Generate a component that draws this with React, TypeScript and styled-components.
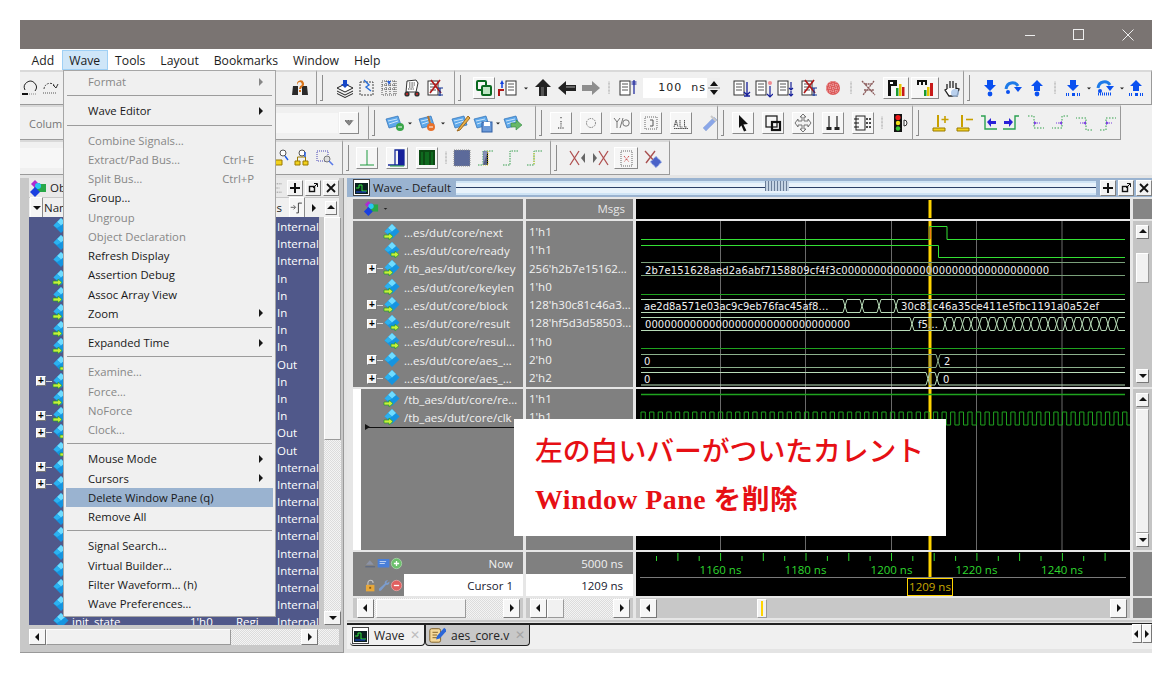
import React from 'react';
import styled, { createGlobalStyle } from 'styled-components';

const UI_FONT = '"Open Sans", "Noto Sans", sans-serif';
const PANEL_GRAY = '#c8c8c8';
const BAR_GRAY = '#f0f0f0';
const WAVE_GRAY = '#808080';
const LIST_BLUE = '#50588a';
const HILITE = '#9ab3d0';
const GREEN = '#34e034';
const DIM_GREEN = '#1fa31f';
const CURSOR = '#ffd400';

const GlobalStyle = createGlobalStyle`
  html, body { margin: 0; padding: 0; background: #fff; }
  body { font-family: ${UI_FONT}; font-size: 11.5px; overflow: hidden; }
`;

const Page = styled.div`
  width: 1172px;
  height: 673px;
  padding: 20px;
  box-sizing: border-box;
`;

const AppWindow = styled.div`
  position: relative;
  width: 1132px;
  height: 633px;
  display: flex;
  flex-direction: column;
  background: ${PANEL_GRAY};
  overflow: hidden;
`;

const TitleBar = styled.div`
  height: 29px;
  flex: none;
  background: #7a7472;
  display: flex;
  justify-content: flex-end;
  align-items: center;
`;

const WinButton = styled.div`
  width: 49px;
  height: 29px;
  display: flex;
  align-items: center;
  justify-content: center;
  svg { display: block; }
`;

const MenuBar = styled.div`
  height: 21px;
  flex: none;
  background: #fff;
  display: flex;
  align-items: center;
  padding-left: 4px;
  font-size: 12.2px;
  color: #1c1c1c;
`;

const MenuTitle = styled.div<{ $active?: boolean }>`
  height: 20px;
  line-height: 19px;
  padding: 0 6.5px;
  box-sizing: border-box;
  background: ${(p) => (p.$active ? '#cfe6f8' : 'transparent')};
  border: 1px solid ${(p) => (p.$active ? '#9fd0f5' : 'transparent')};
`;

const ToolRow = styled.div`
  height: 35px;
  flex: none;
  display: flex;
  background: ${BAR_GRAY};
`;

const ToolGroup = styled.div<{ $w: number }>`
  width: ${(p) => p.$w}px;
  flex: none;
  height: 35px;
  box-sizing: border-box;
  display: flex;
  align-items: center;
  border-top: 2px solid #d9d9d9;
  border-bottom: 1px solid #9a9a9a;
  border-right: 1px solid #9a9a9a;
  overflow: hidden;
`;

const Handle = styled.div`
  width: 12px;
  flex: none;
  height: 26px;
  &::before {
    content: '';
    display: block;
    width: 3px;
    height: 26px;
    margin-left: 3px;
    box-sizing: border-box;
    border-right: 1px solid #8c8c8c;
    border-bottom: 1px solid #8c8c8c;
  }
`;

const Slot = styled.div<{ $w: number; $raised?: boolean }>`
  width: ${(p) => p.$w}px;
  flex: none;
  height: 22px;
  box-sizing: border-box;
  display: flex;
  align-items: center;
  justify-content: center;
  ${(p) =>
    p.$raised
      ? `background:#f6f6f6;border:1px solid;border-color:#fff #8a8a8a #8a8a8a #fff;margin:0 1px;`
      : ''}
  svg { display: block; flex: none; }
`;

const TimeInput = styled.div`
  width: 64px;
  height: 20px;
  margin-left: 4px;
  flex: none;
  background: #fff;
  text-align: right;
  line-height: 20px;
  padding-right: 1px;
  box-sizing: border-box;
  font-family: "DejaVu Sans", sans-serif;
  font-size: 11px;
  letter-spacing: 1px;
  color: #222;
  white-space: pre;
`;

const FieldLabel = styled.div`
  width: 60px;
  flex: none;
  padding-left: 9px;
  box-sizing: border-box;
  color: #777;
  font-size: 11px;
`;

const FieldFill = styled.div<{ $w: number }>`
  width: ${(p) => p.$w}px;
  flex: none;
  height: 20px;
  background: #f7f7f7;
`;

const Pusher = styled.div`
  flex: 1;
`;

const Workspace = styled.div`
  flex: 1;
  display: flex;
  padding-top: 3px;
  background: #e4e4e4;
  min-height: 0;
`;

const ObjectsPanel = styled.div`
  width: 324px;
  flex: none;
  background: ${PANEL_GRAY};
  padding: 0 4px 0 9px;
  box-sizing: border-box;
  display: flex;
  flex-direction: column;
  height: 475px;
  border-bottom: 1px solid #999;
  border-right: 1px solid #999;
`;

const PanelTitle = styled.div<{ $tint?: boolean }>`
  height: 19px;
  flex: none;
  display: flex;
  align-items: center;
  background: ${(p) => (p.$tint ? HILITE : '#e9e9e9')};
  color: #222;
  font-size: 11.5px;
  gap: 3px;
  svg { flex: none; }
`;

const Grip = styled.div`
  flex: 1;
  height: 10px;
  margin: 0 2px;
  border-top: 2px solid #cfe4f5;
  border-bottom: 2px solid #cfe4f5;
  background: linear-gradient(#2a3f66, #2a3f66) center / 100% 1px no-repeat, #e8f2fa;
  position: relative;
`;

const GripDots = styled.div`
  position: absolute;
  left: 309px;
  top: -2px;
  width: 24px;
  height: 10px;
  background: repeating-linear-gradient(90deg, #6c7f99 0 1px, #c5d4e4 1px 3px);
`;

const TitleButton = styled.div`
  width: 16px;
  height: 16px;
  margin-left: -1px;
  flex: none;
  background: #f3f3f3;
  border: 1px solid;
  border-color: #fff #808080 #808080 #fff;
  box-sizing: border-box;
  display: flex;
  align-items: center;
  justify-content: center;
`;

const ListHead = styled.div`
  height: 19px;
  flex: none;
  margin-top: 1px;
  display: flex;
  align-items: center;
  background: ${BAR_GRAY};
  color: #222;
`;

const ListBody = styled.div`
  display: flex;
  height: 408px;
  flex: none;
`;

const ObjectList = styled.div`
  width: 290px;
  flex: none;
  background: ${LIST_BLUE};
  overflow: hidden;
  padding-top: 1px;
  box-sizing: border-box;
`;

const ObjectRow = styled.div`
  height: 17.2px;
  display: grid;
  grid-template-columns: 7px 16px 20px 118px 46px 41px 42px;
  align-items: center;
  color: #fff;
  white-space: nowrap;
  line-height: 17px;
`;

const PlusBox = styled.div`
  width: 10px;
  height: 10px;
  flex: none;
  box-sizing: border-box;
  background: #f2f2f2;
  border: 1px solid;
  border-color: #fff #777 #777 #fff;
  color: #000;
  font: bold 10px/8px "Liberation Sans", sans-serif;
  text-align: center;
`;

const Connector = styled.div`
  width: 6px;
  height: 1px;
  flex: none;
  background: #d8d8d8;
`;

const VScroll = styled.div`
  width: 17px;
  flex: none;
  margin-left: 5px;
  background: repeating-conic-gradient(#dcdcdc 0 25%, #f4f4f4 0 50%) 0 0 / 2px 2px;
  display: flex;
  flex-direction: column;
`;

const PaneScroll = styled.div`
  background: #c4c4c4;
  display: flex;
  flex-direction: column;
  padding: 4px 3px;
`;

const SmallArrowBtn = styled.div`
  height: 14px;
  flex: none;
  background: #f3f3f3;
  border: 1px solid;
  border-color: #fff #777 #777 #fff;
  box-sizing: border-box;
  display: flex;
  align-items: center;
  justify-content: center;
`;

const Thumb = styled.div<{ $h: number; $mt?: number }>`
  height: ${(p) => p.$h}px;
  margin-top: ${(p) => p.$mt || 0}px;
  flex: none;
  background: #f1f1f1;
  border: 1px solid;
  border-color: #fff #9a9a9a #9a9a9a #fff;
  box-sizing: border-box;
`;

const Flexer = styled.div`
  flex: 1;
`;

const HScroll = styled.div<{ $plain?: boolean }>`
  height: 20px;
  display: flex;
  align-items: center;
  background: ${(p) =>
    p.$plain ? PANEL_GRAY : 'repeating-conic-gradient(#dcdcdc 0 25%, #f4f4f4 0 50%) 0 0 / 2px 2px'};
`;

const ObjectsHScroll = styled(HScroll)`
  margin-top: 4px;
  height: 16px;
  & > div { height: 16px; }
`;

const HArrow = styled.div`
  width: 17px;
  height: 19px;
  flex: none;
  background: #f6f6f6;
  border: 1px solid;
  border-color: #fff #777 #777 #fff;
  box-sizing: border-box;
  display: flex;
  align-items: center;
  justify-content: center;
`;

const HThumb = styled.div<{ $w: number; $ml?: number }>`
  width: ${(p) => p.$w}px;
  margin-left: ${(p) => p.$ml || 0}px;
  height: 19px;
  flex: none;
  background: #f1f1f1;
  border: 1px solid;
  border-color: #fff #9a9a9a #9a9a9a #fff;
  box-sizing: border-box;
  display: flex;
  justify-content: center;
`;

const MarkLine = styled.div`
  width: 2px;
  height: 15px;
  margin-top: 1px;
  background: ${CURSOR};
`;

const WavePanel = styled.div`
  margin-left: 3px;
  width: 805px;
  flex: none;
  background: ${PANEL_GRAY};
  display: flex;
  flex-direction: column;
  height: 444px;
`;

const WaveGrid = styled.div`
  display: grid;
  grid-template-columns: 170px 107px 494px 19px;
  grid-template-rows: 20px 166px 161px 44px 20px;
  column-gap: 3px;
  row-gap: 2px;
  padding: 2px 0 0 6px;
  height: 421px;
  flex: none;
  background: #e6e6e6;
`;

const GrayCell = styled.div`
  background: ${WAVE_GRAY};
  color: #f2f2f2;
  position: relative;
  overflow: hidden;
`;

const MsgsLabel = styled.div`
  text-align: right;
  padding-right: 8px;
  line-height: 20px;
  color: #e6e6e6;
`;

const AddIconCell = styled.div`
  padding: 1px 0 0 10px;
  display: flex;
  align-items: center;
  gap: 2px;
`;

const CurrentPaneStrip = styled.div`
  display: flex;
  height: 100%;
`;

const PaneMarker = styled.div`
  width: 8px;
  flex: none;
  background: #fff;
`;

const PaneRows = styled.div<{ $pad: number }>`
  flex: 1;
  padding-top: ${(p) => p.$pad}px;
  min-width: 0;
`;

const SignalRow = styled.div`
  height: 18.3px;
  display: grid;
  grid-template-columns: 16px 16px 5px 1fr;
  align-items: center;
  white-space: nowrap;
  padding-left: 14px;
  font-size: 11.5px;
`;

const SignalRowInner = styled(SignalRow)`
  padding-left: 6px;
`;

const TreeCell = styled.div`
  display: flex;
  align-items: center;
`;

const ValueRow = styled.div`
  height: 18.3px;
  line-height: 18.3px;
  padding-left: 3px;
  white-space: nowrap;
  font-size: 11.5px;
`;

const InsertLine = styled.div`
  position: absolute;
  left: 12px;
  top: 38px;
  right: 0;
  height: 1px;
  background: #111;
  &::before {
    content: '';
    position: absolute;
    left: 0;
    top: -3px;
    border-left: 5px solid #111;
    border-top: 3px solid transparent;
    border-bottom: 3px solid transparent;
  }
`;

const CursorRows = styled.div`
  display: flex;
  flex-direction: column;
  height: 100%;
`;

const CursorLine = styled.div<{ $white?: boolean }>`
  height: 22px;
  display: flex;
  align-items: center;
  justify-content: flex-end;
  padding-right: 10px;
  background: ${(p) => (p.$white ? '#fff' : 'transparent')};
  color: ${(p) => (p.$white ? '#202030' : '#f0f0f0')};
`;

const CursorHead = styled.div`
  height: 22px;
  display: grid;
  grid-template-columns: 51px 1fr;
`;

const HeadIcons = styled.div`
  display: flex;
  align-items: center;
  justify-content: flex-end;
  gap: 0;
  padding-right: 1px;
`;

const Canvas = styled.svg`
  display: block;
  width: 100%;
  height: 100%;
  background: #000;
  font-family: "DejaVu Sans", sans-serif;
`;

const ScrollCell = styled.div`
  display: flex;
  flex-direction: column;
  background: ${PANEL_GRAY};
  height: 100%;
  padding: 0 3px 0 4px;
  box-sizing: border-box;
`;

const GrayBlock = styled.div`
  background: #858585;
`;

const TabStrip = styled.div`
  margin-top: 3px;
  height: 24px;
  flex: none;
  display: flex;
  background: ${BAR_GRAY};
  border-top: 2px solid #222;
  padding-left: 3px;
  font-size: 12px;
  position: relative;
`;

const Tab = styled.div<{ $w: number; $current?: boolean }>`
  width: ${(p) => p.$w}px;
  height: 21px;
  box-sizing: border-box;
  display: flex;
  align-items: center;
  gap: 5px;
  padding-left: 2px;
  color: #222;
  background: ${(p) => (p.$current ? PANEL_GRAY : BAR_GRAY)};
  border-bottom: 1px solid #222;
  border-right: 1px solid #222;
  border-left: ${(p) => (p.$current ? '1px solid #222' : '0')};
  border-radius: 0 0 4px 4px;
  svg { flex: none; }
`;

const TabClose = styled.span<{ $dim?: boolean }>`
  margin-left: auto;
  margin-right: 4px;
  color: ${(p) => (p.$dim ? '#a4a4a4' : '#bdbdbd')};
  font: bold 12px "DejaVu Sans", sans-serif;
`;

const TabNav = styled.div`
  position: absolute;
  right: 0;
  top: -1px;
  display: flex;
`;

const NavArrow = styled(HArrow)`
  width: 10px;
  svg { flex: none; }
`;

const BottomFill = styled.div`
  flex: 1;
  background: ${PANEL_GRAY};
`;

const DropMenu = styled.div`
  position: absolute;
  left: 43px;
  top: 50px;
  width: 213px;
  height: 547px;
  box-sizing: border-box;
  padding: 1px 2px 0;
  background: ${BAR_GRAY};
  border: 1px solid #a6a6a6;
  font-size: 11.3px;
  z-index: 3;
`;

const DropItem = styled.div<{ $off?: boolean; $hot?: boolean }>`
  height: 19.25px;
  line-height: 19px;
  display: flex;
  padding: 0 10px 0 22px;
  color: ${(p) => (p.$off ? '#878787' : '#181818')};
  background: ${(p) => (p.$hot ? HILITE : 'transparent')};
  white-space: nowrap;
`;

const Shortcut = styled.span`
  margin-left: auto;
  padding-right: 9px;
`;

const SubArrow = styled.span`
  margin-left: auto;
  align-self: center;
  width: 0;
  height: 0;
  border-left: 4px solid currentColor;
  border-top: 4px solid transparent;
  border-bottom: 4px solid transparent;
`;

const DropSep = styled.div`
  height: 1px;
  margin: 4px 1px 5px;
  background: #9c9c9c;
`;

const Callout = styled.div`
  position: absolute;
  left: 494px;
  top: 399px;
  width: 432px;
  height: 117px;
  box-sizing: border-box;
  padding: 16px 0 0 21px;
  background: #fff;
  color: #e60f14;
  font-family: "Liberation Serif", "Noto Sans CJK JP", serif;
  z-index: 2;
  white-space: nowrap;
`;

const CalloutLine = styled.div<{ $bold?: boolean }>`
  font-size: 27.8px;
  line-height: 34px;
  font-weight: ${(p) => (p.$bold ? 700 : 500)};
  letter-spacing: ${(p) => (p.$bold ? 0.5 : 0)}px;
  margin-bottom: 14px;
`;

/* ---- icons ---- */

const Svg: React.FC<{ s?: number; children: React.ReactNode }> = ({ s = 20, children }) => (
  <svg width={s} height={s} viewBox="0 0 20 20">{children}</svg>
);

const Sheet = ({ x = 3 }: { x?: number }) => (
  <>
    <rect x={x} y="3" width="10" height="14" fill="#fff" stroke="#333" />
    <path d={`M${x + 2} 6h6M${x + 2} 9h6M${x + 2} 12h6`} stroke="#555" />
  </>
);

const BlueDown = ({ y = 2 }: { y?: number }) => (
  <path d={`M7 ${y}h6v5h3l-6 6-6-6h3z`} fill="#0a50f0" />
);
const BlueUp = ({ y = 2 }: { y?: number }) => (
  <path d={`M10 ${y}l6 6h-3v5H7V${y + 6}H4z`} fill="#0a50f0" />
);
const BlueHop = () => (
  <>
    <path d="M3 11C4 4 12 3 15 8" fill="none" stroke="#1e7be8" strokeWidth="3" />
    <path d="M11 9h8l-4 5z" fill="#0a50f0" />
    <circle cx="5" cy="14" r="2" fill="#0a50f0" />
  </>
);
const DotBar = () => <path d="M3 15h1v3H3zM5 15h1v3H5zM9 15h3v3H9zM14 15h1v3h-1zM16 15h1v3h-1z" fill="#0a50f0" />;

const Folder = ({ children }: { children?: React.ReactNode }) => (
  <>
    <path d="M1 6l12-3 3 9-12 3z" fill="#5ea8ea" stroke="#2f6fb5" strokeWidth=".7" />
    <path d="M3 8l9-2M4 11l9-3" stroke="#cde6fb" />
    {children}
  </>
);

const DotStep = ({ c = '#33a04a', m = '#7a3fe0', flip = false }: { c?: string; m?: string; flip?: boolean }) => (
  <g transform={flip ? 'matrix(-1 0 0 1 20 0)' : undefined}>
    <path d="M2 3h6v12h10" fill="none" stroke={c} strokeDasharray="1.5 1.5" />
    <path d="M8 8l3 2-3 2z" fill={m} />
    <path d="M11 10h4" stroke={m} strokeDasharray="1 1" />
  </g>
);

const ICONS: Record<string, React.ReactNode> = {
  undo: <><path d="M5 12a6 6 0 1 1 10 1" fill="none" stroke="#222" /><path d="M2 16h6" stroke="#111" strokeWidth="2" /><path d="M9 16h8" stroke="#888" strokeDasharray="1 1" /></>,
  redo: <><path d="M4 11a6 6 0 0 1 11-3" fill="none" stroke="#444" strokeDasharray="2 1" /><path d="M13 7l3 3 2-4" fill="none" stroke="#333" /><path d="M3 15h14" stroke="#555" strokeDasharray="1 1" /></>,
  binoc: <><path d="M3 8h5v9H2zM12 8h5l1 9h-6z" fill="#2a2a2a" /><path d="M7 6a3.5 3.5 0 1 1 5 3l-1 2H9l1-3a2 2 0 1 0-2-1z" fill="#d8741a" /><rect x="9" y="12" width="2" height="2" fill="#d8741a" /></>,
  stack: <><path d="M2 10l8-4 8 4-8 4z" fill="#fff" stroke="#222" /><path d="M2 13l8 4 8-4M2 15.5l8 4 8-4" fill="none" stroke="#222" /><path d="M8 2h4v4h2l-4 4-4-4h2z" fill="#1848c8" /></>,
  dotfile: <><rect x="3" y="4" width="13" height="13" fill="none" stroke="#444" strokeDasharray="2 1" /><path d="M7 2l5 5-3 2 5 4" fill="none" stroke="#2a6fd8" strokeWidth="1.4" /></>,
  dotgrid: <><rect x="3" y="3" width="14" height="14" fill="none" stroke="#555" strokeDasharray="1 1" /><path d="M3 7h14M3 11h14M7 3v14M11 3v14M15 3v14" stroke="#444" strokeDasharray="1 1" /><path d="M8 3h4l-2 4z" fill="#2a5fd8" /></>,
  forklift: <><path d="M5 3l9-1 2 3-2 9H4z" fill="#fff" stroke="#333" /><path d="M7 5h6M7 7h6M7 9h5M6 11h6" stroke="#333" strokeDasharray="1 .6" /><circle cx="5" cy="16" r="2.6" fill="#333" /><circle cx="5" cy="16" r="1" fill="#d22" /><circle cx="15" cy="16" r="2.6" fill="#333" /><circle cx="15" cy="16" r="1" fill="#d22" /></>,
  delwave: <><Sheet /><path d="M6 2l10 13M15 2L5 15" stroke="#b01818" strokeWidth="1.6" /><path d="M13 10h5M15 10v8M13 17h5" stroke="#103090" strokeWidth="1.2" /></>,
  link: <><rect x="3" y="3" width="9" height="9" rx="1" fill="none" stroke="#0a6a20" strokeWidth="2" /><rect x="8" y="8" width="9" height="9" rx="1" fill="#bfe6c4" stroke="#0a6a20" strokeWidth="2" /></>,
  fileup: <><rect x="8" y="3" width="10" height="14" fill="#fff" stroke="#333" /><path d="M10 6h6M10 9h6M10 12h6" stroke="#555" /><path d="M4 2l-2 4h4z" fill="#1040e0" /><path d="M4 6v4" stroke="#1040e0" strokeWidth="1.5" /><path d="M1 18v-6h5" fill="none" stroke="#b01818" strokeWidth="2" /></>,
  caret: <path d="M6 9h8l-4 4z" fill="#222" />,
  up: <><path d="M10 1l8 8h-4v9H6V9H2z" fill="#222" /><path d="M8 9h3v9H8z" fill="#555" /></>,
  left: <><path d="M1 10l8-7v4h10v6H9v4z" fill="#222" /><path d="M9 8h9v2H9z" fill="#666" /></>,
  right: <path d="M19 10l-8-7v4H1v6h10v4z" fill="#8e8e8e" />,
  dots: <path d="M10 1v18" stroke="#555" strokeDasharray="1 1" />,
  sheetup: <><Sheet /><path d="M17 2v14M14.5 4h5M14.5 6h5" stroke="#16209a" strokeWidth="1.2" /></>,
  sheetdown: <><Sheet /><path d="M16 4v13M13 14l3 3 3-3M13 18h6" fill="none" stroke="#16209a" strokeWidth="1.3" /></>,
  sheetpin: <><Sheet /><path d="M17 8v10M14 16l3 3 3-3" fill="none" stroke="#16209a" strokeWidth="1.2" /><circle cx="17" cy="5" r="2" fill="#f08a90" /></>,
  sheetdbl: <><Sheet /><path d="M16 4v8M14 10l2 2 2-2M16 13v5M14 16l2 2 2-2" fill="none" stroke="#16209a" strokeWidth="1.2" /></>,
  redmesh: <><circle cx="10" cy="10" r="7" fill="#dc5a5a" /><path d="M4 7h12M3 10h14M4 13h12M7 4v12M10 3v14M13 4v12" stroke="#f8d0d0" strokeWidth=".7" strokeDasharray="1 1" /></>,
  xwave: <path d="M3 3l13 14M15 3L4 17M5 12h10M6 6h8" fill="none" stroke="#8a5a5a" strokeWidth="1.3" strokeDasharray="2 .6" />,
  perfP: <><rect x="2" y="2" width="9" height="6" fill="#111" /><path d="M4 4h3v2H4z" fill="#fff" /><rect x="10" y="10" width="2.5" height="8" fill="#1a9a30" /><rect x="13" y="6" width="2.5" height="12" fill="#e6c400" /><rect x="16" y="9" width="2.5" height="9" fill="#c81a1a" /><rect x="2" y="8" width="3" height="10" fill="#111" /></>,
  perfM: <><path d="M2 2h10v5h-2V4H8v3H6V4H4v3H2z" fill="#111" /><rect x="9" y="12" width="2.5" height="6" fill="#1a9a30" /><rect x="12" y="9" width="2.5" height="9" fill="#e6c400" /><rect x="15" y="5" width="3" height="13" fill="#c81a1a" /></>,
  hand: <><path d="M5 11V6M8 10V3M11 10V3M14 11V5M5 11l-2 1 4 6h8l2-7-3-1" fill="#fff" stroke="#222" strokeWidth="1.3" /><circle cx="13" cy="15" r="4" fill="#a8c4e8" opacity=".8" /></>,
  stepin: <><BlueDown /><circle cx="10" cy="16" r="2.4" fill="#0a50f0" /></>,
  stepover: <BlueHop />,
  stepout: <><BlueUp /><circle cx="10" cy="16" r="2.4" fill="#0a50f0" /></>,
  stepinb: <><BlueDown /><DotBar /></>,
  stepoverb: <><g transform="translate(0 -1)"><BlueHop /></g><path d="M3 16h14" stroke="#0a50f0" strokeWidth="3" strokeDasharray="1 1" /></>,
  stepoutb: <><BlueUp /><DotBar /></>,
  folderg: <Folder><circle cx="15" cy="14" r="4" fill="#3aa64a" /><path d="M13 14h4" stroke="#fff" /></Folder>,
  folderr: <Folder><path d="M10 3l2 7" stroke="#b8722a" strokeWidth="2" /><circle cx="13" cy="14" r="4" fill="#e8702a" /><path d="M11 14h4" stroke="#fff" /></Folder>,
  folderp: <Folder><path d="M17 3l-9 12-2 3 3-1 10-12z" fill="#e8b24a" stroke="#a06a20" /></Folder>,
  folders: <Folder><rect x="9" y="9" width="10" height="10" fill="#6c9ad8" stroke="#2f5fa5" /><rect x="11" y="9" width="6" height="4" fill="#fff" /></Folder>,
  foldera: <Folder><path d="M8 10h5V7l6 5-6 5v-3H8z" fill="#68b868" stroke="#2f8a3f" strokeWidth=".6" /></Folder>,
  fi: <path d="M10 4v2M10 8v6M7 15h6" stroke="#666" strokeDasharray="1 .8" strokeWidth="1.4" />,
  fo: <circle cx="10" cy="10" r="4.5" fill="none" stroke="#777" strokeDasharray="1.4 1" />,
  fio: <><path d="M3 5l3 4 3-4M6 9v6M9 15l3-10" fill="none" stroke="#666" strokeWidth=".9" /><circle cx="15" cy="10" r="3.2" fill="none" stroke="#666" strokeWidth=".9" /></>,
  fbuf: <><rect x="4" y="4" width="12" height="12" fill="none" stroke="#666" strokeDasharray="1 1" /><path d="M9 7h3v6H9" fill="none" stroke="#555" /></>,
  fall: <path d="M3 14l2-7 2 7M4 11.5h2M9 7v7h2.5M13.5 7v7H16M3 15.5h14" fill="none" stroke="#555" strokeDasharray="1.4 .4" />,
  wand: <><path d="M4 15L15 4l3 3L7 18z" fill="#8aa6e8" stroke="#a0b4dc" strokeDasharray="1 .7" /><path d="M12 3l5 5" stroke="#c8c8c8" strokeWidth="2" /></>,
  pointer: <path d="M6 2l9 9-4.6.5 3 6-2.4 1-2.6-6L6 15z" fill="#111" />,
  zoombox: <><rect x="3" y="3" width="11" height="11" fill="none" stroke="#222" strokeWidth="1.3" /><rect x="9" y="9" width="8" height="8" fill="none" stroke="#111" strokeWidth="2.2" /></>,
  pan: <path d="M10 1l3 3h-2v4h4V6l3 4-3 4v-2h-4v4h2l-3 3-3-3h2v-4H5v2l-3-4 3-4v2h4V4H7z" fill="#f2f2f2" stroke="#666" strokeWidth=".9" />,
  pins: <><path d="M6 3v11M14 3v11" stroke="#222" strokeWidth="1.2" /><rect x="3.500" y="14" width="5" height="3" fill="#222" /><rect x="11.500" y="14" width="5" height="3" fill="#222" /></>,
  grid3: <><rect x="3" y="3" width="9" height="14" fill="none" stroke="#222" /><path d="M1 6h5M1 10h5M1 14h5M14 5v2M13 6h2M14 9v2M13 10h2M14 13v2M13 14h2M17 5v2M16 6h2M17 9v2M16 10h2M17 13v2M16 14h2" stroke="#111" /></>,
  traffic: <><rect x="4" y="1" width="8" height="18" fill="#111" /><circle cx="8" cy="4.500" r="2.600" fill="#f01818" /><circle cx="8" cy="10" r="2.200" fill="#f0e018" /><circle cx="8" cy="15.500" r="2.200" fill="#3ac83a" /><path d="M14 7a3 3 0 0 1 0 6z" fill="#fff" stroke="#333" /></>,
  addy: <><path d="M7 2v12" stroke="#c8a000" strokeWidth="2" /><path d="M2 15h12v3H2z" fill="#f2d21e" stroke="#9a7a00" /><path d="M14 3v7M10.500 6.500h7" stroke="#c8a000" strokeWidth="1.600" /></>,
  suby: <><path d="M7 2v12" stroke="#c8a000" strokeWidth="2" /><path d="M2 15h12v3H2z" fill="#f2d21e" stroke="#9a7a00" /><path d="M11 6.500h7" stroke="#c8a000" strokeWidth="1.600" /></>,
  gleft: <><path d="M3 3h4v13h12" fill="none" stroke="#2aa050" strokeWidth="1.400" /><path d="M9 9l4-4v3h5v3h-5v3z" fill="#2a20d8" /></>,
  gright: <><path d="M17 3h-4v13H1" fill="none" stroke="#2aa050" strokeWidth="1.400" /><path d="M11 9L7 5v3H2v3h5v3z" fill="#2a20d8" /></>,
  ds1: <DotStep m="#7a3fe0" />,
  ds2: <DotStep m="#7a3fe0" flip />,
  ds3: <g transform="matrix(1 0 0 -1 0 20)"><DotStep flip /></g>,
  ds4: <g transform="matrix(1 0 0 -1 0 20)"><DotStep /></g>,
  findy: <><path d="M2 12h8v5H2z" fill="#f2d21e" stroke="#9a7a00" /><circle cx="11" cy="5" r="3" fill="#fff" stroke="#555" /><path d="M13 8l3 4" stroke="#1a5ae8" strokeWidth="1.400" /></>,
  findyy: <><path d="M3 13h5v4H3zM11 13h5v4h-5z" fill="#f2d21e" stroke="#9a7a00" /><path d="M5.500 13V9h8v4" fill="none" stroke="#9a7a00" /><circle cx="10" cy="5" r="3" fill="#fff" stroke="#555" /><path d="M13 4v5" stroke="#1a5ae8" strokeWidth="1.400" /></>,
  finddots: <><rect x="2" y="3" width="11" height="10" fill="none" stroke="#4a48b8" strokeDasharray="1 1" /><circle cx="12" cy="11" r="3" fill="#ddd" stroke="#777" /><path d="M14 13l4 4" stroke="#5a7ae8" strokeWidth="1.600" /></>,
  f1: <path d="M10 2v15M3 17h14" stroke="#1f9a3f" />,
  f2: <><path d="M1 17h7V2h9v15H1" fill="none" stroke="#162a9a" strokeWidth="1.300" /><rect x="11" y="2" width="6" height="15" fill="#16209a" /><path d="M3 18h14" stroke="#1f9a3f" /></>,
  f3: <path d="M3 17V3h14v14M7 4v13M13 4v13" fill="#0f6a1f" stroke="#0c4a14" strokeWidth="2" />,
  hatch: <rect x="2" y="2" width="16" height="16" fill="#5c6a9a" stroke="#8a8a8a" strokeDasharray="1 1" />,
  s1: <><path d="M1 17h5V3h10" fill="none" stroke="#3aa050" strokeDasharray="1.500 1" /><path d="M6 17h5V3" stroke="#e0d020" strokeDasharray="1 1" /><rect x="6" y="3" width="4" height="14" fill="#6c78a8" opacity=".8" /></>,
  s2: <path d="M2 17h7V3h9" fill="none" stroke="#3aa050" strokeDasharray="1.500 1" />,
  s3: <><path d="M2 17h7V3h9" fill="none" stroke="#3aa050" strokeDasharray="1.500 1" /><path d="M9 16V5" stroke="#e0d020" strokeDasharray="1 1" /></>,
  xl: <><path d="M3 3l9 14M12 3L3 17" stroke="#b05050" strokeWidth="1.300" /><path d="M18 5l-4 5 4 5z" fill="#666" /></>,
  xr: <><path d="M8 3l9 14M17 3L8 17" stroke="#b05050" strokeWidth="1.300" /><path d="M2 5l4 5-4 5z" fill="#666" /></>,
  xdoc: <><rect x="5" y="3" width="11" height="15" fill="none" stroke="#666" strokeDasharray="1 1" /><path d="M8 8l5 6M13 8l-5 6" stroke="#c02020" strokeDasharray="1 1" /></>,
  xdel: <><path d="M3 3l11 12M13 3L4 15" stroke="#a85050" strokeWidth="1.400" /><rect x="10" y="10" width="8" height="8" fill="#4a62c8" transform="rotate(45 14 14)" stroke="#9ab0e8" strokeDasharray="1 1" /></>,
  combo: <path d="M5 7h10l-5 6z" fill="#888" stroke="#333" strokeDasharray="1 1" />,
  hdrs: <><path d="M1 9h6M5 6l3 3-3 3" fill="none" stroke="#222" /><path d="M9 17h3V3h5" fill="none" stroke="#222" strokeWidth="1.200" /></>,
  undock: <path d="M15 4H4v12h11M4 10h8" fill="none" stroke="#777" strokeDasharray="1.500 1" />,
  sigdim: <><path d="M3 12l6-7 6 7z" fill="#8c93a6" /><path d="M2 15h15" stroke="#5f6a80" strokeWidth="2" /></>,
  chat: <><rect x="1" y="3" width="18" height="13" rx="1" fill="#4a7fd8" /><path d="M4 7h10M4 10h8" stroke="#fff" /></>,
  plusg: <><circle cx="10" cy="10" r="8" fill="#6cc06c" stroke="#b8e0b8" /><path d="M6 10h8M10 6v8" stroke="#fff" strokeWidth="2" /></>,
  lock: <><path d="M6 10V6a4 4 0 0 1 8 0" fill="none" stroke="#c8c8c8" strokeWidth="1.600" /><rect x="3" y="9" width="13" height="10" fill="#e8a83a" /><rect x="8" y="12" width="3" height="3" fill="#8a5a10" /></>,
  wrench: <path d="M17 2a4 4 0 0 0-5 5L3 15v3h3l8-9a4 4 0 0 0 5-5l-3 2-2-1z" fill="#7c9ccc" />,
  minusr: <><circle cx="10" cy="10" r="8" fill="#e06060" stroke="#f0b0b0" /><path d="M6 10h8" stroke="#fff" strokeWidth="2" /></>,
  veridoc: <><rect x="2" y="3" width="12" height="15" rx="2" fill="#f4d89a" stroke="#7a5a20" /><path d="M5 7h6M5 10h5M5 13h6" stroke="#7a5a20" /><path d="M18 2l-8 9-1 4 4-1 8-9z" fill="#2a66d8" /></>,
  gap: null,
};

const Ico = ({ n, s }: { n: string; s?: number }) => <Svg s={s}>{ICONS[n]}</Svg>;

type Tool = [string, number, boolean?];

const ToolItems = ({ items }: { items: Tool[] }) => (
  <>
    {items.map(([name, width, raised], i) => (
      <Slot key={i} $w={width} $raised={raised}>
        {name !== 'gap' && <Ico n={name} s={name === 'caret' ? 10 : name === 'dots' ? 14 : 20} />}
      </Slot>
    ))}
  </>
);

const Spinner = () => (
  <Slot $w={14}>
    <svg width="12" height="20" viewBox="0 0 12 20">
      <rect width="12" height="20" fill="#eee" />
      <path d="M2 8l4-5 4 5zM2 12h8l-4 5z" fill="#111" />
      <path d="M0 10h12" stroke="#888" />
    </svg>
  </Slot>
);

/* ---- signal icons ---- */

const Signal = ({ dir }: { dir?: 'in' | 'out' | 'none' }) => (
  <svg width="17" height="17" viewBox="0 0 17 17">
    <path d="M9 0l7.500 7.500L9 15 1.500 7.500z" fill="#1594e0" />
    <path d="M9 0l4 4-4 3.500L5 4z" fill="#6fdcff" />
    <path d="M1.500 7.500L5 4l4 3.500L5 10z" fill="#2cb2f0" />
    {dir === 'in' && <path d="M1 11h5V9l4 3.500L6 16v-2H1z" fill="#c8f03a" stroke="#239a30" strokeWidth=".7" />}
    {dir === 'out' && <path d="M8 11h4V9l4 3.500-4 3.500v-2H8z" fill="#c8f03a" stroke="#239a30" strokeWidth=".7" />}
  </svg>
);

const Diamonds = ({ s = 18 }: { s?: number }) => (
  <svg width={s} height={s} viewBox="0 0 18 18">
    <path d="M6 1l4 4-4 4-4-4z" fill="#b02ad0" />
    <path d="M5 9l5-5 4 3-5 6z" fill="#1a40e0" />
    <rect x="8" y="5" width="9" height="8" fill="#28a848" />
    <circle cx="9" cy="7" r="3" fill="#28c8f0" />
    <path d="M6 8l5 5-5 5-5-5z" fill="#1a40e0" />
  </svg>
);

const WaveTabIcon = () => (
  <svg width="17" height="17" viewBox="0 0 17 17">
    <rect x=".5" y=".5" width="16" height="16" fill="#fff" stroke="#444" />
    <rect x="2" y="4" width="13" height="11" fill="#0c2020" />
    <path d="M3 9h3V6h3v6h5" fill="none" stroke="#2ee03a" />
    <path d="M3 13h10" stroke="#1a48e0" />
  </svg>
);

const Tri = ({ d }: { d: 'u' | 'd' | 'l' | 'r' }) => {
  const paths = { u: 'M1 6l4-4 4 4z', d: 'M1 3h8L5 7z', l: 'M6 1L2 5l4 4z', r: 'M3 1l4 4-4 4z' };
  return (
    <svg width="10" height="10" viewBox="0 0 10 10">
      <path d={paths[d]} fill="#111" />
    </svg>
  );
};

const TitleBtns = () => (
  <>
    <TitleButton>
      <svg width="10" height="10" viewBox="0 0 10 10"><path d="M5 0v10M0 5h10" stroke="#111" strokeWidth="2" /></svg>
    </TitleButton>
    <TitleButton>
      <svg width="11" height="11" viewBox="0 0 11 11"><rect x="1.500" y="4.500" width="5" height="5" fill="none" stroke="#111" strokeWidth="1.400" /><path d="M5 6l4-4M6 1.500h3.500V5" fill="none" stroke="#111" /></svg>
    </TitleButton>
    <TitleButton>
      <svg width="10" height="10" viewBox="0 0 10 10"><path d="M1 1l8 8M9 1l-8 8" stroke="#111" strokeWidth="1.800" /></svg>
    </TitleButton>
  </>
);

/* ---- data ---- */

const MENU_TITLES = ['Add', 'Wave', 'Tools', 'Layout', 'Bookmarks', 'Window', 'Help'];

type MenuEntry = { t?: string; off?: boolean; sub?: boolean; key?: string; hot?: boolean };

const MENU: MenuEntry[] = [
  { t: 'Format', off: true, sub: true },
  {},
  { t: 'Wave Editor', sub: true },
  {},
  { t: 'Combine Signals…', off: true },
  { t: 'Extract/Pad Bus…', off: true, key: 'Ctrl+E' },
  { t: 'Split Bus…', off: true, key: 'Ctrl+P' },
  { t: 'Group…' },
  { t: 'Ungroup', off: true },
  { t: 'Object Declaration', off: true },
  { t: 'Refresh Display' },
  { t: 'Assertion Debug' },
  { t: 'Assoc Array View' },
  { t: 'Zoom', sub: true },
  {},
  { t: 'Expanded Time', sub: true },
  {},
  { t: 'Examine…', off: true },
  { t: 'Force…', off: true },
  { t: 'NoForce', off: true },
  { t: 'Clock…', off: true },
  {},
  { t: 'Mouse Mode', sub: true },
  { t: 'Cursors', sub: true },
  { t: 'Delete Window Pane (q)', hot: true },
  { t: 'Remove All' },
  {},
  { t: 'Signal Search…' },
  { t: 'Virtual Builder…' },
  { t: 'Filter Waveform… (h)' },
  { t: 'Wave Preferences…' },
];

type ObjRow = { mode: string; plus?: boolean; dir?: 'in' | 'out' | 'none' };
const mk = (mode: string, dir: 'in' | 'out' | 'none', plus = false): ObjRow => ({ mode, dir, plus });

const OBJECTS: ObjRow[] = [
  mk('Internal', 'none'), mk('Internal', 'none'), mk('Internal', 'none'),
  mk('In', 'in'), mk('In', 'in'), mk('In', 'in'), mk('In', 'in'), mk('In', 'in'),
  mk('Out', 'out'),
  mk('In', 'in', true), mk('In', 'in'), mk('In', 'in', true), mk('Out', 'out', true), mk('Out', 'out'),
  mk('Internal', 'none', true), mk('Internal', 'none', true),
  mk('Internal', 'none'), mk('Internal', 'none'), mk('Internal', 'none'), mk('Internal', 'none'),
  mk('Internal', 'none'), mk('Internal', 'none'), mk('Internal', 'none'),
];

type Sig = { name: string; value: string; plus?: boolean; dir: 'in' | 'out' | 'none' };

const SIGNALS: Sig[] = [
  { name: '…es/dut/core/next', value: "1'h1", dir: 'in' },
  { name: '…es/dut/core/ready', value: "1'h1", dir: 'out' },
  { name: '/tb_aes/dut/core/key', value: "256'h2b7e15162…", dir: 'in', plus: true },
  { name: '…es/dut/core/keylen', value: "1'h0", dir: 'in' },
  { name: '…es/dut/core/block', value: "128'h30c81c46a3…", dir: 'in', plus: true },
  { name: '…es/dut/core/result', value: "128'hf5d3d58503…", dir: 'out', plus: true },
  { name: '…es/dut/core/resul…', value: "1'h0", dir: 'out' },
  { name: '…es/dut/core/aes_…', value: "2'h0", dir: 'none', plus: true },
  { name: '…es/dut/core/aes_…', value: "2'h2", dir: 'none', plus: true },
];

const SIGNALS2: Sig[] = [
  { name: '/tb_aes/dut/core/re…', value: "1'h1", dir: 'in' },
  { name: '/tb_aes/dut/core/clk', value: "1'h1", dir: 'in' },
];

const GRID_X = [720.5, 805.5, 891.5, 976.5, 1062];
const CURSOR_X = 930;

/* ---- wave drawing ---- */

// first segment has no left edge and the last none on the right, the bus runs off them
const busPath = (xs: number[], top: number, bot: number) => {
  const mid = (top + bot) / 2;
  const last = xs.length - 2;
  let d = '';
  for (let i = 0; i <= last; i++) {
    const b = xs[i + 1];
    const start = i === 0 ? xs[i] : xs[i] + 2;
    d += `M${start} ${top}`;
    d += i === last ? `H${b}M${b} ${bot}` : `H${b - 2}L${b} ${mid}L${b - 2} ${bot}`;
    d += `H${start}`;
    if (i > 0) d += `L${xs[i]} ${mid}L${start} ${top}`;
  }
  return d;
};

const Bus = ({ xs, top, bot, color }: { xs: number[]; top: number; bot: number; color: string }) => (
  <path d={busPath(xs, top, bot)} fill="none" stroke={color} />
);

const clockPath = () => {
  let d = 'M641 425';
  for (let x = 641; x < 1124; x += 8.6) {
    d += `V412H${(x + 4.3).toFixed(1)}V425H${(x + 8.6).toFixed(1)}`;
  }
  return d;
};

const resultEdges = () => {
  const xs = [641, 912, 945];
  for (let x = 954; x < 1123; x += 8.55) xs.push(+x.toFixed(1));
  xs.push(1125);
  return xs;
};

const WaveText = styled.text`
  font-size: 10px;
  fill: #f0f0f0;
`;

const RulerText = styled.text`
  font-family: ${UI_FONT};
  font-size: 11.5px;
  fill: #2fd82f;
  text-anchor: middle;
`;

const CursorText = styled.text`
  font-family: ${UI_FONT};
  font-size: 11.5px;
  fill: #c8a800;
  text-anchor: middle;
`;

const GridLines = ({ y1, y2 }: { y1: number; y2: number }) => (
  <path d={GRID_X.map((x) => `M${x} ${y1}V${y2}`).join('')} stroke="#6a6a6a" />
);

const HeaderWave = () => (
  <Canvas viewBox="636 199 494 20">
    <rect x={CURSOR_X - 1.5} y="200" width="3" height="18" fill={CURSOR} />
  </Canvas>
);

const PaneOneWaves = () => (
  <Canvas viewBox="636 221 494 166">
    <GridLines y1={221} y2={387} />
    <rect x={CURSOR_X - 1.5} y="221" width="3" height="166" fill={CURSOR} />
    <path d="M641 239.500H929.500V226.500H947V239.500H1125" fill="none" stroke={GREEN} />
    <path d="M641 245.500H938.500V257.500H1125" fill="none" stroke={GREEN} />
    <path d="M930 227v12" stroke="#e03020" />
    <Bus xs={[641, 1125]} top={262.5} bot={275.5} color="#7aa07a" />
    <WaveText x="645" y="273.500" textLength="404">2b7e151628aed2a6abf7158809cf4f3c00000000000000000000000000000000</WaveText>
    <path d="M641 294.500H1125" stroke={DIM_GREEN} />
    <Bus xs={[641, 845, 862, 879, 896, 1125]} top={299.5} bot={312.5} color="#b8dcb8" />
    <WaveText x="644" y="310">ae2d8a571e03ac9c9eb76fac45af8…</WaveText>
    <WaveText x="901" y="310" textLength="198">30c81c46a35ce411e5fbc1191a0a52ef</WaveText>
    <Bus xs={resultEdges()} top={317.5} bot={330.5} color="#b8dcb8" />
    <WaveText x="645" y="328" textLength="205">00000000000000000000000000000000</WaveText>
    <WaveText x="918" y="328">f5…</WaveText>
    <path d="M641 348.500H1125" stroke={DIM_GREEN} />
    <Bus xs={[641, 938, 1125]} top={354.5} bot={367.5} color="#8cb08c" />
    <WaveText x="644" y="365">0</WaveText>
    <WaveText x="944" y="365">2</WaveText>
    <Bus xs={[641, 928, 937, 1125]} top={372.5} bot={385} color="#b8dcb8" />
    <WaveText x="644" y="383">0</WaveText>
    <WaveText x="943" y="383">0</WaveText>
    <path d={`M${CURSOR_X} 262v14M${CURSOR_X} 299v14M${CURSOR_X} 318v13M${CURSOR_X} 354v14M${CURSOR_X} 372v13`} stroke="#3050b0" strokeWidth="1" opacity=".6" />
  </Canvas>
);

const PaneTwoWaves = () => (
  <Canvas viewBox="636 389 494 161">
    <GridLines y1={389} y2={550} />
    <rect x={CURSOR_X - 1.5} y="389" width="3" height="161" fill={CURSOR} />
    <path d="M641 394.500H1125" stroke={DIM_GREEN} strokeWidth="1.400" />
    <path d={clockPath()} fill="none" stroke={DIM_GREEN} />
  </Canvas>
);

const ticks = () => {
  const out: string[] = [];
  for (let i = -4; i < 19; i++) {
    const x = 720.6 + i * 21.36;
    if (x < 637 || x > 1128) continue;
    const major = (i + 40) % 2 === 0;
    out.push(`M${x.toFixed(1)} ${major ? 553 : 556}V561`);
  }
  return out.join('');
};

const Ruler = () => (
  <Canvas viewBox="636 552 494 44">
    <path d={ticks()} stroke="#2fd82f" />
    <rect x={CURSOR_X - 1.5} y="552" width="3" height="25" fill={CURSOR} />
    <path d="M640 577.500H1126" stroke="#7a7a7a" />
    {[['1160 ns', 720.5], ['1180 ns', 805.5], ['1200 ns', 891.5], ['1220 ns', 976.5], ['1240 ns', 1062]].map(([t, x]) => (
      <RulerText key={t as string} x={x as number} y="574">{t}</RulerText>
    ))}
    <rect x="907.500" y="578.500" width="45" height="17" fill="#000" stroke={CURSOR} />
    <CursorText x="930" y="591">1209 ns</CursorText>
  </Canvas>
);

const SigRows = ({ rows, Row }: { rows: Sig[]; Row: typeof SignalRow }) => (
  <>
    {rows.map((s, i) => (
      <Row key={i}>
        <TreeCell>{s.plus && <><PlusBox>+</PlusBox><Connector /></>}</TreeCell>
        <Signal dir={s.dir} />
        <span />
        <span>{s.name}</span>
      </Row>
    ))}
  </>
);

export default function App() {
  return (
    <Page>
      <GlobalStyle />
      <AppWindow>
        <TitleBar>
          <WinButton>
            <svg width="12" height="12" viewBox="0 0 12 12"><path d="M1 6.500h10" stroke="#eee" /></svg>
          </WinButton>
          <WinButton>
            <svg width="12" height="12" viewBox="0 0 12 12"><rect x=".5" y=".5" width="10" height="10" fill="none" stroke="#eee" /></svg>
          </WinButton>
          <WinButton>
            <svg width="12" height="12" viewBox="0 0 12 12"><path d="M.5.5l11 11M11.500.5l-11 11" stroke="#eee" /></svg>
          </WinButton>
        </TitleBar>

        <MenuBar>
          {MENU_TITLES.map((m) => (
            <MenuTitle key={m} $active={m === 'Wave'}>{m}</MenuTitle>
          ))}
        </MenuBar>

        <ToolRow>
          <ToolGroup $w={297}>
            <ToolItems items={[['undo', 20], ['redo', 20]]} />
            <Pusher />
            <ToolItems items={[['binoc', 20], ['gap', 6]]} />
          </ToolGroup>
          <ToolGroup $w={138}>
            <Handle />
            <ToolItems items={[['gap', 5], ['stack', 22], ['dotfile', 22], ['dotgrid', 22], ['forklift', 24], ['delwave', 22]]} />
          </ToolGroup>
          <ToolGroup $w={509}>
            <Handle />
            <ToolItems items={[['gap', 5], ['link', 22, true], ['fileup', 24], ['caret', 12], ['up', 22], ['left', 25], ['right', 24], ['dots', 12], ['sheetup', 24]]} />
            <TimeInput>100  ns</TimeInput>
            <Spinner />
            <ToolItems items={[['gap', 9], ['sheetdown', 22], ['sheetpin', 22], ['sheetdbl', 22], ['delwave', 26], ['redmesh', 22], ['dots', 14], ['xwave', 22], ['gap', 2], ['perfP', 26, true], ['perfM', 28, true], ['hand', 24]]} />
          </ToolGroup>
          <ToolGroup $w={188}>
            <Handle />
            <ToolItems items={[['gap', 3], ['stepin', 22], ['stepover', 24], ['stepout', 24], ['dots', 12], ['stepinb', 24], ['caret', 7], ['stepoverb', 26], ['caret', 7], ['stepoutb', 22]]} />
          </ToolGroup>
        </ToolRow>

        <ToolRow>
          <ToolGroup $w={349}>
            <FieldLabel>Column</FieldLabel>
            <FieldFill $w={258} />
            <Slot $w={20} $raised><Ico n="combo" s={16} /></Slot>
          </ToolGroup>
          <ToolGroup $w={167}>
            <Handle />
            <ToolItems items={[['gap', 4], ['folderg', 20], ['caret', 10], ['gap', 3], ['folderr', 20], ['caret', 10], ['gap', 3], ['folderp', 20], ['gap', 2], ['folders', 20], ['caret', 10], ['foldera', 20]]} />
          </ToolGroup>
          <ToolGroup $w={182}>
            <Handle />
            <ToolItems items={[['gap', 1], ['fi', 22, true], ['gap', 6], ['fo', 22, true], ['gap', 6], ['fio', 22, true], ['gap', 6], ['fbuf', 22, true], ['gap', 6], ['fall', 22, true], ['gap', 5], ['wand', 22]]} />
          </ToolGroup>
          <ToolGroup $w={195}>
            <Handle />
            <ToolItems items={[['gap', 1], ['pointer', 22, true], ['gap', 6], ['zoombox', 22, true], ['gap', 6], ['pan', 22, true], ['gap', 6], ['pins', 22, true], ['gap', 6], ['grid3', 22, true], ['dots', 14], ['traffic', 22]]} />
          </ToolGroup>
          <ToolGroup $w={208}>
            <Handle />
            <ToolItems items={[['gap', 4], ['addy', 24], ['suby', 23], ['gleft', 24], ['gright', 24], ['ds1', 24], ['ds2', 24], ['ds3', 24], ['ds4', 24]]} />
          </ToolGroup>
        </ToolRow>

        <ToolRow>
          <ToolGroup $w={323}>
            <FieldFill $w={250} />
            <ToolItems items={[['gap', 2], ['findy', 20], ['findyy', 20], ['gap', 3], ['finddots', 20]]} />
          </ToolGroup>
          <ToolGroup $w={208}>
            <Handle />
            <ToolItems items={[['gap', 0], ['f1', 22, true], ['gap', 6], ['f2', 22, true], ['gap', 6], ['f3', 22, true], ['dots', 14], ['hatch', 18], ['gap', 6], ['s1', 20], ['gap', 4], ['s2', 20], ['gap', 4], ['s3', 20]]} />
          </ToolGroup>
          <ToolGroup $w={119}>
            <Handle />
            <ToolItems items={[['gap', 2], ['xl', 24], ['xr', 24], ['xdoc', 24, true], ['gap', 2], ['xdel', 22]]} />
          </ToolGroup>
        </ToolRow>

        <Workspace>
          <ObjectsPanel>
            <PanelTitle>
              <Diamonds />
              <span>Objects</span>
              <Pusher />
              <Ico n="undock" s={14} />
              <TitleBtns />
            </PanelTitle>
            <ListHead>
              <Slot $w={13} $raised><Tri d="d" /></Slot>
              <span>Name</span>
              <Pusher />
              <span>s</span>
              <Slot $w={6} />
              <Slot $w={16} $raised><Ico n="hdrs" s={14} /></Slot>
              <Slot $w={16}><Tri d="r" /></Slot>
              <Slot $w={17}><SmallArrowBtn><Tri d="u" /></SmallArrowBtn></Slot>
            </ListHead>
            <ListBody>
              <ObjectList>
                {OBJECTS.map((o, i) => (
                  <ObjectRow key={i}>
                    <span />
                    <TreeCell>{o.plus && <><PlusBox>+</PlusBox><Connector /></>}</TreeCell>
                    <Signal dir={o.dir} />
                    <span />
                    <span />
                    <span />
                    <span>{o.mode}</span>
                  </ObjectRow>
                ))}
                <ObjectRow>
                  <span />
                  <span />
                  <Signal dir="none" />
                  <span>init_state</span>
                  <span>1'h0</span>
                  <span>Regi</span>
                  <span>Internal</span>
                </ObjectRow>
              </ObjectList>
              <VScroll>
                <Thumb $h={223} />
                <Flexer />
                <SmallArrowBtn><Tri d="d" /></SmallArrowBtn>
              </VScroll>
            </ListBody>
            <ObjectsHScroll>
              <HArrow><Tri d="l" /></HArrow>
              <HThumb $w={185} />
              <Flexer />
              <HArrow><Tri d="r" /></HArrow>
              <Slot $w={21} />
            </ObjectsHScroll>
          </ObjectsPanel>

          <WavePanel>
            <PanelTitle $tint>
              <Slot $w={3} />
              <WaveTabIcon />
              <span>Wave - Default</span>
              <Grip><GripDots /></Grip>
              <TitleBtns />
            </PanelTitle>

            <WaveGrid>
              <GrayCell>
                <AddIconCell>
                  <Diamonds s={16} />
                  <Ico n="caret" s={9} />
                </AddIconCell>
              </GrayCell>
              <GrayCell><MsgsLabel>Msgs</MsgsLabel></GrayCell>
              <HeaderWave />
              <GrayBlock />

              <GrayCell>
                <PaneRows $pad={2}>
                  <SigRows rows={SIGNALS} Row={SignalRow} />
                </PaneRows>
              </GrayCell>
              <GrayCell>
                <PaneRows $pad={2}>
                  {SIGNALS.map((s, i) => <ValueRow key={i}>{s.value}</ValueRow>)}
                </PaneRows>
              </GrayCell>
              <PaneOneWaves />
              <PaneScroll>
                <SmallArrowBtn><Tri d="u" /></SmallArrowBtn>
                <Thumb $h={30} $mt={14} />
                <Flexer />
                <SmallArrowBtn><Tri d="d" /></SmallArrowBtn>
              </PaneScroll>

              <GrayCell>
                <CurrentPaneStrip>
                  <PaneMarker />
                  <PaneRows $pad={1}>
                    <SigRows rows={SIGNALS2} Row={SignalRowInner} />
                  </PaneRows>
                </CurrentPaneStrip>
                <InsertLine />
              </GrayCell>
              <GrayCell>
                <PaneRows $pad={1}>
                  {SIGNALS2.map((s, i) => <ValueRow key={i}>{s.value}</ValueRow>)}
                </PaneRows>
              </GrayCell>
              <PaneTwoWaves />
              <PaneScroll>
                <SmallArrowBtn><Tri d="u" /></SmallArrowBtn>
                <Thumb $h={124} $mt={2} />
                <Flexer />
                <SmallArrowBtn><Tri d="d" /></SmallArrowBtn>
              </PaneScroll>

              <GrayCell>
                <CursorRows>
                  <CursorHead>
                    <HeadIcons>
                      <Ico n="sigdim" s={13} />
                      <Ico n="chat" s={13} />
                      <Ico n="plusg" s={13} />
                    </HeadIcons>
                    <CursorLine>Now</CursorLine>
                  </CursorHead>
                  <CursorHead>
                    <HeadIcons>
                      <Ico n="lock" s={13} />
                      <Ico n="wrench" s={13} />
                      <Ico n="minusr" s={13} />
                    </HeadIcons>
                    <CursorLine $white>Cursor 1</CursorLine>
                  </CursorHead>
                </CursorRows>
              </GrayCell>
              <GrayCell>
                <CursorRows>
                  <CursorLine>5000 ns</CursorLine>
                  <CursorLine $white>1209 ns</CursorLine>
                </CursorRows>
              </GrayCell>
              <Ruler />
              <GrayBlock />

              <ScrollCell>
                <HScroll>
                  <HArrow><Tri d="l" /></HArrow>
                  <HThumb $w={90} $ml={2} />
                  <Flexer />
                  <HArrow><Tri d="r" /></HArrow>
                </HScroll>
              </ScrollCell>
              <ScrollCell>
                <HScroll>
                  <HArrow><Tri d="l" /></HArrow>
                  <HThumb $w={17} />
                  <Flexer />
                  <HArrow><Tri d="r" /></HArrow>
                </HScroll>
              </ScrollCell>
              <ScrollCell>
                <HScroll $plain>
                  <HArrow><Tri d="l" /></HArrow>
                  <HThumb $w={10} $ml={100}><MarkLine /></HThumb>
                  <Flexer />
                  <HArrow><Tri d="r" /></HArrow>
                </HScroll>
              </ScrollCell>
              <GrayBlock />
            </WaveGrid>

            <TabStrip>
              <Tab $w={75}>
                <WaveTabIcon />
                <span>Wave</span>
                <TabClose>✕</TabClose>
              </Tab>
              <Tab $w={105} $current>
                <Ico n="veridoc" s={18} />
                <span>aes_core.v</span>
                <TabClose $dim>✕</TabClose>
              </Tab>
              <Pusher />
              <TabNav>
                <NavArrow><Tri d="l" /></NavArrow>
                <NavArrow><Tri d="r" /></NavArrow>
              </TabNav>
            </TabStrip>
            <BottomFill />
          </WavePanel>
        </Workspace>

        <DropMenu>
          {MENU.map((m, i) =>
            m.t ? (
              <DropItem key={i} $off={m.off} $hot={m.hot}>
                <span>{m.t}</span>
                {m.key && <Shortcut>{m.key}</Shortcut>}
                {m.sub && <SubArrow />}
              </DropItem>
            ) : (
              <DropSep key={i} />
            ),
          )}
        </DropMenu>

        <Callout>
          <CalloutLine>左の白いバーがついたカレント</CalloutLine>
          <CalloutLine $bold>Window Pane を削除</CalloutLine>
        </Callout>
      </AppWindow>
    </Page>
  );
}
